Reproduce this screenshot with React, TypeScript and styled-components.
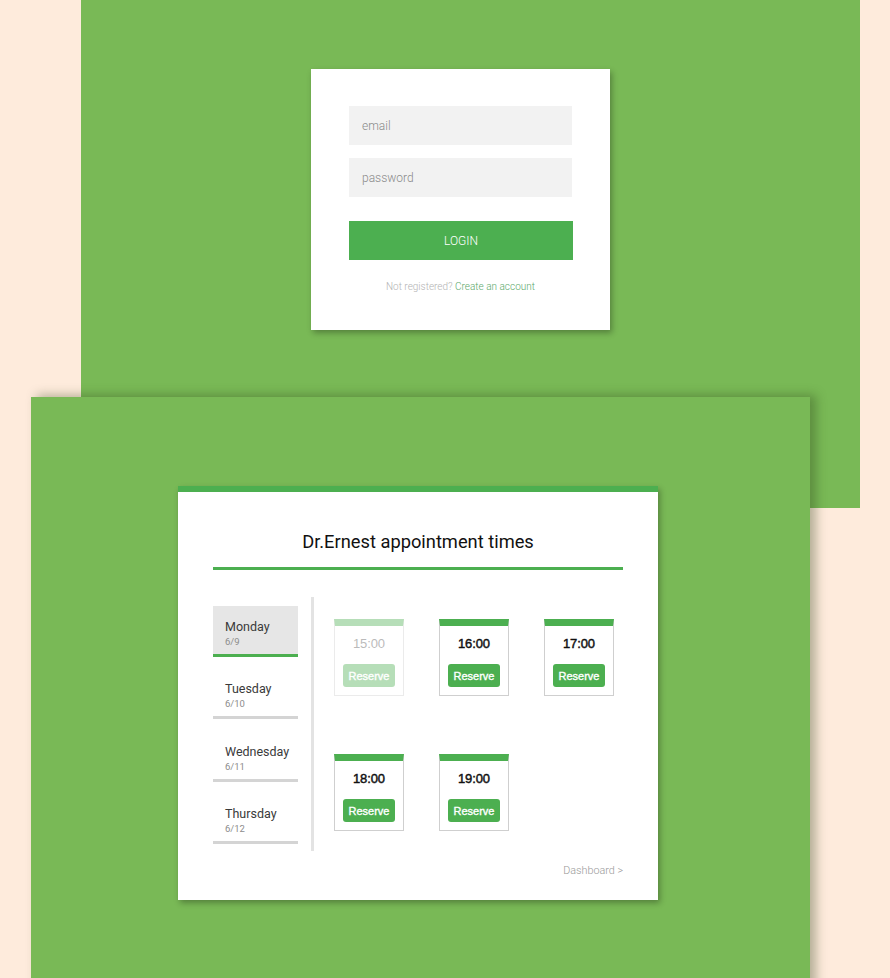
import React from "react";
import styled, { createGlobalStyle } from "styled-components";

const Global = createGlobalStyle`
  html, body { margin: 0; padding: 0; }
  body { background: #feebdc; font-family: Roboto, "Noto Sans", sans-serif; }
  * { box-sizing: border-box; }
`;

const Page = styled.div`
  width: 890px;
  height: 978px;
  overflow: hidden;
  background: #feebdc;
  display: flex;
  flex-direction: column;
`;

const Panel = styled.section<{ $left: number; $height: number; $overlap?: number; $shadow?: boolean }>`
  position: relative;
  margin-left: ${(p) => p.$left}px;
  margin-top: ${(p) => (p.$overlap ? -p.$overlap : 0)}px;
  width: 779px;
  height: ${(p) => p.$height}px;
  flex-shrink: 0;
  background: #79b956;
  box-shadow: ${(p) => (p.$shadow ? "6px -2px 10px rgba(40, 60, 20, 0.35)" : "none")};
`;

const LoginPanel = styled(Panel)`
  padding: 69px 0 0 230px;
`;

const ApptPanel = styled(Panel)`
  padding: 89px 0 0 147px;
`;

const LoginCard = styled.form`
  width: 299px;
  height: 261px;
  background: #fff;
  box-shadow: 2px 3px 6px rgba(0, 0, 0, 0.3);
  padding: 37px 38px 0 38px;
  display: flex;
  flex-direction: column;
`;

const Input = styled.input`
  width: 223px;
  height: 39px;
  border: none;
  outline: none;
  background: #f2f2f2;
  padding: 0 13px;
  font-family: Roboto, sans-serif;
  font-weight: 300;
  font-size: 12px;
  color: #555;
  margin-bottom: 13px;
  &::placeholder { color: #8a8a8a; }
`;

const LoginButton = styled.button`
  margin-top: 11px;
  width: 224px;
  height: 39px;
  border: none;
  background: #4caf50;
  color: #fff;
  font-family: Roboto, sans-serif;
  font-weight: 300;
  font-size: 12px;
  text-transform: uppercase;
`;

const Message = styled.p`
  margin: 21px 0 0 0;
  text-align: center;
  font-family: Roboto, sans-serif;
  font-weight: 300;
  font-size: 10px;
  color: #b3b3b3;
  a { color: #5aa86a; text-decoration: none; }
`;

const ApptCard = styled.div`
  width: 480px;
  height: 414px;
  background: #fff;
  border-top: 6px solid #4caf50;
  box-shadow: 2px 3px 6px rgba(0, 0, 0, 0.3);
  padding: 37px 35px 0 35px;
  display: flex;
  flex-direction: column;
`;

const Title = styled.h1`
  margin: 0;
  text-align: center;
  font-family: Roboto, sans-serif;
  font-weight: 400;
  font-size: 18.3px;
  line-height: 26px;
  color: #111;
  padding-bottom: 12px;
  border-bottom: 3px solid #4caf50;
`;

const Body = styled.div`
  margin-top: 27px;
  display: flex;
  height: 254px;
`;

const DayList = styled.ul`
  list-style: none;
  margin: 9px 0 0 0;
  padding: 0;
  width: 85px;
  display: flex;
  flex-direction: column;
  gap: 11.3px;
`;

const Day = styled.li<{ $active?: boolean }>`
  height: 51px;
  padding: 13px 0 0 12px;
  background: ${(p) => (p.$active ? "#e6e6e6" : "#fff")};
  border-bottom: 3px solid ${(p) => (p.$active ? "#4caf50" : "#d4d4d4")};
`;

const DayName = styled.div`
  font-family: Roboto, sans-serif;
  font-size: 12.5px;
  color: #3a3a3a;
  line-height: 16px;
`;

const DayDate = styled.div`
  font-family: Roboto, sans-serif;
  font-size: 9.5px;
  color: #8c8c8c;
  line-height: 14px;
`;

const Divider = styled.div`
  width: 3px;
  margin-left: 13px;
  background: #e3e3e3;
`;

const SlotGrid = styled.div`
  margin: 22px 0 0 20px;
  display: grid;
  grid-template-columns: repeat(3, 70px);
  grid-auto-rows: 77px;
  column-gap: 35px;
  row-gap: 58px;
  align-content: start;
`;

const Slot = styled.div<{ $disabled?: boolean }>`
  width: 70px;
  height: 77px;
  border: 1px solid #cfcfcf;
  border-top: 7px solid #4caf50;
  display: flex;
  flex-direction: column;
  align-items: center;
  padding-top: 10px;
  opacity: ${(p) => (p.$disabled ? 0.4 : 1)};
`;

const Time = styled.div<{ $disabled?: boolean }>`
  font-family: "Liberation Sans", Arial, sans-serif;
  font-size: 13px;
  font-weight: 400;
  color: ${(p) => (p.$disabled ? "#555" : "#111")};
  -webkit-text-stroke: ${(p) => (p.$disabled ? "0" : "0.45px #111")};
  letter-spacing: -0.1px;
  line-height: 16px;
`;

const ReserveButton = styled.button`
  margin-top: 12px;
  width: 52px;
  height: 23px;
  border: none;
  border-radius: 3px;
  background: #4caf50;
  color: #fff;
  font-family: "Liberation Sans", Arial, sans-serif;
  font-weight: 400;
  font-size: 11px;
  -webkit-text-stroke: 0.35px #fff;
  padding: 0;
`;

const Footer = styled.div`
  margin-top: 13px;
  text-align: right;
  font-family: Roboto, sans-serif;
  font-weight: 300;
  font-size: 10.8px;
  color: #999;
`;

const days = [
  { name: "Monday", date: "6/9", active: true },
  { name: "Tuesday", date: "6/10" },
  { name: "Wednesday", date: "6/11" },
  { name: "Thursday", date: "6/12" },
];

const slots = [
  { time: "15:00", disabled: true },
  { time: "16:00" },
  { time: "17:00" },
  { time: "18:00" },
  { time: "19:00" },
];

export default function App() {
  return (
    <Page>
      <Global />
      <LoginPanel $left={81} $height={508}>
        <LoginCard onSubmit={(e) => e.preventDefault()}>
          <Input type="text" placeholder="email" />
          <Input type="password" placeholder="password" />
          <LoginButton type="button">login</LoginButton>
          <Message>
            Not registered? <a href="#">Create an account</a>
          </Message>
        </LoginCard>
      </LoginPanel>
      <ApptPanel $left={31} $height={600} $overlap={111} $shadow>
        <ApptCard>
          <Title>Dr.Ernest appointment times</Title>
          <Body>
            <DayList>
              {days.map((d) => (
                <Day key={d.name} $active={d.active}>
                  <DayName>{d.name}</DayName>
                  <DayDate>{d.date}</DayDate>
                </Day>
              ))}
            </DayList>
            <Divider />
            <SlotGrid>
              {slots.map((s) => (
                <Slot key={s.time} $disabled={s.disabled}>
                  <Time $disabled={s.disabled}>{s.time}</Time>
                  <ReserveButton type="button">Reserve</ReserveButton>
                </Slot>
              ))}
            </SlotGrid>
          </Body>
          <Footer>Dashboard &gt;</Footer>
        </ApptCard>
      </ApptPanel>
    </Page>
  );
}
